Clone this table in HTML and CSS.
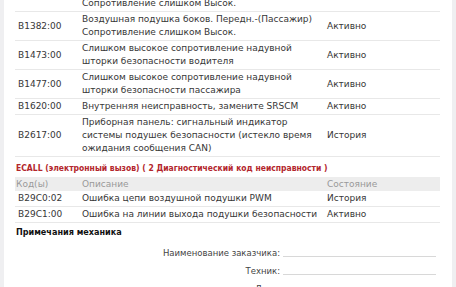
FILE: index.html
```html
<!DOCTYPE html>
<html lang="ru">
<head>
<meta charset="utf-8">
<title>Отчёт о диагностике</title>
<link rel="stylesheet" href="styles.css">
</head>
<body>
<div class="page">
  <table class="dtc">
    <colgroup><col class="c-code"><col class="c-desc"><col class="c-state"></colgroup>
    <tbody>
      <tr><td>B1381:00</td><td>Воздушная подушка боков. Передн.-(Водитель) Сопротивление слишком Высок.</td><td>Активно</td></tr>
      <tr><td>B1382:00</td><td>Воздушная подушка боков. Передн.-(Пассажир) Сопротивление слишком Высок.</td><td>Активно</td></tr>
      <tr><td>B1473:00</td><td>Слишком высокое сопротивление надувной шторки безопасности водителя</td><td>Активно</td></tr>
      <tr><td>B1477:00</td><td>Слишком высокое сопротивление надувной шторки безопасности пассажира</td><td>Активно</td></tr>
      <tr><td>B1620:00</td><td>Внутренняя неисправность, замените SRSCM</td><td>Активно</td></tr>
      <tr><td>B2617:00</td><td>Приборная панель: сигнальный индикатор системы подушек безопасности (истекло время ожидания сообщения CAN)</td><td>История</td></tr>
    </tbody>
  </table>

  <h3 class="sys">ECALL (электронный вызов) ( 2 Диагностический код неисправности )</h3>
  <table class="dtc">
    <colgroup><col class="c-code"><col class="c-desc"><col class="c-state"></colgroup>
    <thead>
      <tr><th>Код(ы)</th><th>Описание</th><th>Состояние</th></tr>
    </thead>
    <tbody>
      <tr><td>B29C0:02</td><td>Ошибка цепи воздушной подушки PWM</td><td>История</td></tr>
      <tr><td>B29C1:00</td><td>Ошибка на линии выхода подушки безопасности</td><td>Активно</td></tr>
    </tbody>
  </table>

  <h2 class="notes">Примечания механика</h2>
  <div class="sign">
    <div class="sign-row"><span class="sign-label">Наименование заказчика:</span><span class="sign-line"></span></div>
    <div class="sign-row"><span class="sign-label">Техник:</span><span class="sign-line"></span></div>
    <div class="sign-row"><span class="sign-label">Дата:</span><span class="sign-line"></span></div>
  </div>
</div>
</body>
</html>
```

FILE: styles.css
```css
html, body {
  margin: 0;
  padding: 0;
}
body {
  background: #efeff1;
  font-family: "DejaVu Sans", Verdana, sans-serif;
  font-size: 9px;
  line-height: 13px;
  color: #363636;
}
.page {
  background: #fff;
  margin: -17px 4px 0 4px;
  padding: 0 12px 20px 11px;
}
.dtc {
  width: 100%;
  border-collapse: collapse;
  table-layout: fixed;
}
.c-code { width: 64px; }
.c-state { width: 116px; }
.dtc td {
  padding: 1px 3px;
  border-bottom: 1px solid #e8e8e8;
  vertical-align: middle;
  text-align: left;
}
.dtc th {
  padding: 1px 3px;
  line-height: 12px;
  background: #ededed;
  color: #999;
  font-weight: normal;
  text-align: left;
}
.dtc th:first-child { padding-left: 1px; }
.sys {
  margin: 5px 0 2px 1px;
  font-family: "DejaVu Sans Condensed", "DejaVu Sans", sans-serif;
  font-size: 8.5px;
  line-height: 13px;
  font-weight: bold;
  color: #b3262c;
}
.notes {
  margin: 3px 0 0 1px;
  font-family: "DejaVu Sans Condensed", "DejaVu Sans", sans-serif;
  font-size: 9px;
  line-height: 13px;
  font-weight: bold;
  color: #111;
}
.sign {
  margin-top: 8px;
  display: flex;
  flex-direction: column;
  gap: 5px;
}
.sign-row {
  display: grid;
  grid-template-columns: 1fr 153px;
  column-gap: 3px;
  margin-right: 4px;
  align-items: end;
}
.sign-label {
  text-align: right;
  font-size: 8.5px;
  color: #444;
}
.sign-line {
  border-bottom: 1px solid #d8d8d8;
  margin-bottom: 3px;
}
```
